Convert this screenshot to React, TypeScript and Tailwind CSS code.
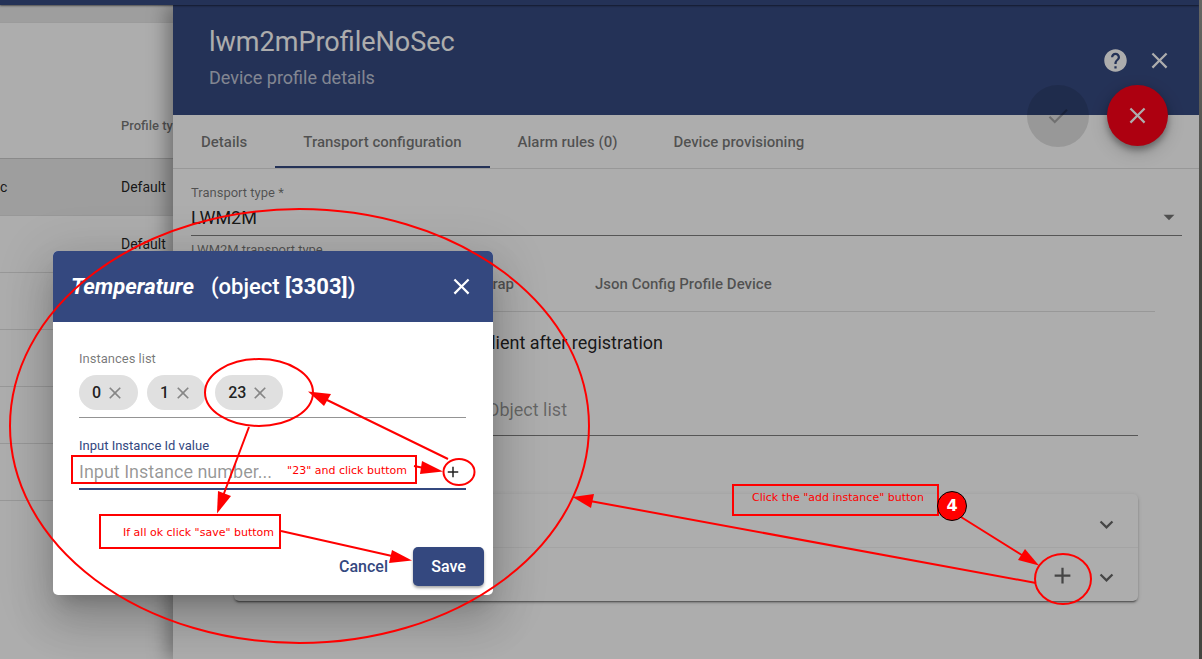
import React from "react";
import { MdAdd, MdArrowDropDown, MdCheck, MdClose, MdExpandMore, MdHelp } from "react-icons/md";

const profileRows = [
  { name: "c", type: "Default", selected: true },
  { name: "", type: "Default", selected: false },
  { name: "", type: "", selected: false },
  { name: "", type: "", selected: false },
  { name: "", type: "", selected: false },
  { name: "", type: "", selected: false },
];

const drawerTabs = ["Details", "Transport configuration", "Alarm rules (0)", "Device provisioning"];

function ProfileTable() {
  return (
    <section className="w-[173px] shrink-0 overflow-hidden bg-[#e9e9e9] pt-[17px]">
      <div className="h-full border-t border-black/10 bg-white pt-[71px]">
        <table className="w-full table-fixed border-collapse text-left">
          <thead>
            <tr className="h-16 border-b border-black/12">
              <th className="w-[121px] p-0" aria-label="Name" />
              <th className="p-0 text-[13px] font-medium whitespace-nowrap text-black/54">Profile type</th>
            </tr>
          </thead>
          <tbody>
            {profileRows.map((row, i) => (
              <tr
                key={i}
                className={
                  row.selected
                    ? "h-[57px] border-b border-black/12 bg-[#e9e9e9]"
                    : "h-[57px] border-b border-black/12"
                }
              >
                <td className="p-0 text-sm text-black/87">{row.name}</td>
                <td className="p-0 text-sm text-black/87">{row.type}</td>
              </tr>
            ))}
          </tbody>
        </table>
      </div>
    </section>
  );
}

function DrawerHeader() {
  return (
    <header className="relative flex h-[110px] shrink-0 justify-between bg-[#364a80] pr-[26px] pl-9 text-white">
      <div className="pt-[21px]">
        <h1 className="text-[27px] leading-8">lwm2mProfileNoSec</h1>
        <p className="mt-2 text-lg leading-6 text-white/70">Device profile details</p>
      </div>
      <div className="flex h-[111px] items-center gap-[17px]">
        <button aria-label="Help" className="text-[27px]">
          <MdHelp />
        </button>
        <button aria-label="Close details" className="text-[27px]">
          <MdClose />
        </button>
      </div>
      <div className="absolute top-20 right-[31px] flex gap-[18px]">
        <button
          disabled
          aria-label="Apply changes"
          className="flex size-[62px] items-center justify-center rounded-full bg-black/12 text-[26px] text-black/26"
        >
          <MdCheck />
        </button>
        <button
          aria-label="Discard changes"
          className="flex size-[61px] items-center justify-center rounded-full bg-[#ff0018] text-[27px] text-white shadow-[0_4px_6px_rgba(0,0,0,0.3),0_6px_18px_rgba(0,0,0,0.2)]"
        >
          <MdClose />
        </button>
      </div>
    </header>
  );
}

function TransportSettings() {
  return (
    <div className="pt-4 pr-[17px] pl-[18px]">
      <div className="relative border-b border-black/50">
        <label htmlFor="transport" className="block text-[13px] leading-4 text-black/54">
          Transport type *
        </label>
        <select
          id="transport"
          className="block h-[34px] w-full appearance-none bg-transparent text-lg text-black/87"
        >
          <option>LWM2M</option>
        </select>
        <MdArrowDropDown className="pointer-events-none absolute right-0 bottom-[5px] text-[26px] text-black/54" />
      </div>
      <p className="mt-1 text-[13px] leading-5 text-black/54">LWM2M transport type</p>

      <div className="mr-[27px]">
        <div role="tablist" className="flex h-[52px] items-center border-b border-black/12 pb-0.5 text-[15px] font-medium text-black/54">
          <button role="tab" className="w-[323px] text-right">
            Bootstrap
          </button>
          <button role="tab" className="ml-[81px]">
            Json Config Profile Device
          </button>
        </div>
        <div className="mr-[17px] ml-[43px]">
          <p className="w-[429px] pt-[19px] text-right text-lg leading-6 whitespace-nowrap text-black/87">
            client after registration
          </p>
          <div className="mt-[43px] border-b border-black/50 pb-[13px] pl-[253px] text-lg leading-6 text-black/42">
            Object list
          </div>
          <div className="mt-[58px] rounded-[5px] shadow-[0_3px_1px_-2px_rgba(0,0,0,0.3),0_2px_2px_rgba(0,0,0,0.2),0_1px_4px_rgba(0,0,0,0.15)]">
            <div className="flex h-[53px] items-center justify-end pt-2 pr-[18px]">
              <button aria-label="Expand object" className="text-[27px] text-black/60">
                <MdExpandMore />
              </button>
            </div>
            <div className="flex h-[54px] items-center justify-end gap-[17px] border-t border-black/5 pt-1.5 pr-[18px]">
              <button aria-label="Add instance" className="mb-1 text-[27px] text-black/60">
                <MdAdd />
              </button>
              <button aria-label="Expand Temperature" className="text-[27px] text-black/60">
                <MdExpandMore />
              </button>
            </div>
          </div>
        </div>
      </div>
    </div>
  );
}

function Drawer() {
  return (
    <section className="relative min-w-0 flex-1 bg-white shadow-[-6px_0_18px_rgba(0,0,0,0.35)]">
      <DrawerHeader />
      <nav role="tablist" className="flex h-[54px] border-b border-black/12">
        {drawerTabs.map((tab) => (
          <button
            key={tab}
            role="tab"
            className={
              tab === "Transport configuration"
                ? "border-b-2 border-[#364a80] px-7 pt-1 text-[15px] font-medium text-black/54"
                : "border-b-2 border-transparent px-7 pt-1 text-[15px] font-medium text-black/54"
            }
          >
            {tab}
          </button>
        ))}
      </nav>
      <TransportSettings />
    </section>
  );
}

function InstanceDialog() {
  return (
    <div
      role="dialog"
      aria-labelledby="dialog-title"
      className="absolute top-[251px] left-[53px] w-[440px] overflow-hidden rounded-[5px] bg-white shadow-[0_12px_17px_-8px_rgba(0,0,0,0.2),0_27px_43px_3px_rgba(0,0,0,0.14),0_10px_52px_9px_rgba(0,0,0,0.12)]"
    >
      <header className="flex h-[71px] items-center justify-between bg-[#34487f] pr-[18px] pl-[18px] text-white">
        <h2 id="dialog-title" className="flex gap-[17px] text-[22px] font-medium">
          <em className="font-bold">Temperature</em>
          <span>
            (object <b className="font-bold">[3303]</b>)
          </span>
        </h2>
        <button aria-label="Close dialog" className="text-[27px]">
          <MdClose />
        </button>
      </header>
      <form className="pt-7 pr-[9px] pb-[9px] pl-[26px]" onSubmit={(e) => e.preventDefault()}>
        <div className="mr-[18px] border-b border-black/42 pb-[7px]">
          <p className="text-[13px] leading-[18px] text-black/54">Instances list</p>
          <ul className="mt-[7px] flex gap-[9px]">
            {["0", "1", "23"].map((id) => (
              <li
                key={id}
                className="flex h-[35px] items-center gap-1 rounded-full bg-[#e0e0e0] px-[13px] text-base font-medium text-black/87"
              >
                {id}
                <button aria-label={"Remove instance " + id} className="text-xl text-black/40">
                  <MdClose />
                </button>
              </li>
            ))}
          </ul>
        </div>
        <div className="mt-[19px] mr-[18px] border-b-2 border-[#34487f]">
          <label htmlFor="instance" className="block text-[13px] leading-[18px] text-[#34487f]">
            Input Instance Id value
          </label>
          <div className="flex h-[33px] items-center">
            <input
              id="instance"
              placeholder="Input Instance number..."
              className="min-w-0 flex-1 bg-transparent text-lg outline-none placeholder:text-black/42"
            />
            <button aria-label="Add" className="mr-[4px] text-lg text-black/87">
              <MdAdd />
            </button>
          </div>
        </div>
        <div className="mt-[57px] flex justify-end gap-[7px] text-base font-medium">
          <button type="button" className="h-[39px] px-[18px] text-[#34487f]">
            Cancel
          </button>
          <button
            type="submit"
            className="h-[39px] w-[71px] rounded-[5px] bg-[#34487f] text-white shadow-[0_2px_3px_rgba(0,0,0,0.35)]"
          >
            Save
          </button>
        </div>
      </form>
    </div>
  );
}

function Annotations() {
  return (
    <div className="pointer-events-none absolute inset-0 text-[11px] text-[#ff0000] [font-family:'DejaVu_Sans',sans-serif]">
      <svg className="absolute top-0 left-0" width="1202" height="659" fill="none" stroke="#ff0000" strokeWidth="2">
        <ellipse cx="299.5" cy="426" rx="289.5" ry="217" />
        <ellipse cx="259" cy="392.5" rx="54" ry="33.5" />
        <ellipse cx="459" cy="472" rx="15.5" ry="13" />
        <ellipse cx="1063" cy="579" rx="28" ry="25" />
        <path d="M961 517L1025 557M1036 583L590 501M448 459L325 399M249 427L223 496M281 531L392 556M414 466L424 468" />
        <g fill="#ff0000" stroke="none">
          <path d="M1039 565.5L1025 549L1018 560Z" />
          <path d="M572.5 497L594 494L591 508Z" />
          <path d="M308 391.5L331 394L324 406Z" />
          <path d="M217 513.5L218 491L231 496Z" />
          <path d="M412 560.5L392 550L389 563Z" />
          <path d="M443 471.5L422 461L420 474Z" />
        </g>
      </svg>
      <div className="absolute top-[455px] left-[71px] flex h-[29px] w-[346px] items-center justify-end border-2 border-[#ff0000] pt-[3px] pr-2">
        "23" and click buttom
      </div>
      <div className="absolute top-[514px] left-[99px] flex h-[35px] w-[182px] items-center justify-end border-2 border-[#ff0000] pt-[3px] pr-[5px]">
        If all ok click "save" buttom
      </div>
      <div className="absolute top-[484px] left-[732px] flex h-8 w-[207px] items-center justify-end border-2 border-[#ff0000] pr-[13px] pb-[3px]">
        Click the "add instance" button
      </div>
      <div className="absolute top-[491px] left-[937px] flex size-[30px] items-center justify-center rounded-full border border-black bg-[#ff0000] text-base font-bold text-white">
        4
      </div>
    </div>
  );
}

export default function App() {
  return (
    <div className="flex min-h-screen [font-family:Roboto,sans-serif]">
      <main className="relative flex min-w-0 flex-1 flex-col overflow-hidden">
        <div className="relative z-10 h-[5px] shrink-0 bg-[#364a80] shadow-[0_1px_2px_rgba(0,0,0,0.5)]" />
        <div className="flex flex-1">
          <ProfileTable />
          <Drawer />
        </div>
        <div className="absolute inset-0 z-20 bg-black/32" />
        <div className="absolute inset-0 z-30">
          <InstanceDialog />
          <Annotations />
        </div>
      </main>
      <div className="w-[3px] shrink-0 bg-linear-to-b from-[#666663] to-[#454641] to-40%" />
    </div>
  );
}
